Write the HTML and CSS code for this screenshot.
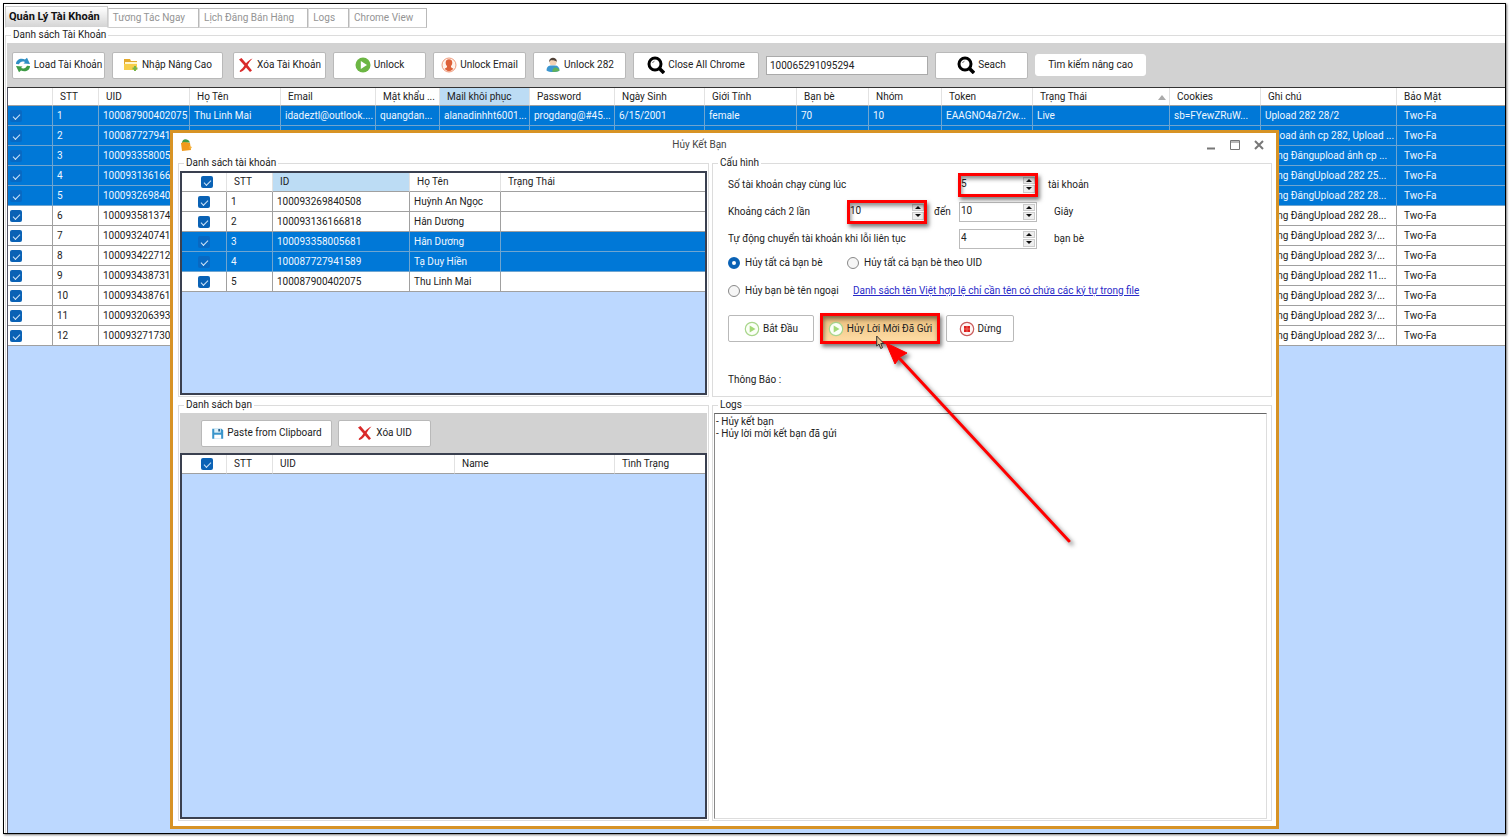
FILE: index.html
```html
<!DOCTYPE html>
<html lang="vi">
<head>
<meta charset="utf-8">
<title>Quản Lý Tài Khoản</title>
<link rel="stylesheet" href="styles.css">
</head>
<body>
<svg class="sprite" aria-hidden="true">
  <symbol id="i-sync" viewBox="0 0 16 16"><path d="M1 7C1 2.500 6 .5 10 2.500L12 .8 15 7 8.500 6.600 10 5C7 3.800 5 5 4 7.200z" fill="#2f8fc4"/><path d="M15 9C15 13.500 10 15.500 6 13.500L4 15.200 1 9 7.500 9.400 6 11C9 12.200 11 11 12 8.800z" fill="#3d9b45"/></symbol>
  <symbol id="i-folder" viewBox="0 0 16 16"><path d="M1 2h6l1 2h6v9H1z" fill="#e3a92c"/><path d="M2 5h12v3H2z" fill="#fff6cf"/><path d="M1 7h13v6H1z" fill="#f7cf4c"/><path d="M12 9v5M9.500 11.500h5" stroke="#79b648" stroke-width="2"/></symbol>
  <symbol id="i-x" viewBox="0 0 16 16"><path d="M1 2.500L3.500 1 8 6.200C10 4 12 2.500 14.500 1.500 12.500 3.500 11 5.500 9.600 8L14 13.500 12 15 8 10.400C6.500 12.500 5 14 2.500 15 1.500 14.500 1.500 14 2 13.500 4 12 5 10.500 6.400 8.500z" fill="#d92a2a"/></symbol>
  <symbol id="i-go" viewBox="0 0 16 16"><circle cx="8" cy="8" r="7.500" fill="#6cb644"/><path d="M5.800 4v8l6.200-4z" fill="#fff"/></symbol>
  <symbol id="i-person" viewBox="0 0 16 16"><circle cx="8" cy="8" r="7" fill="#fff3ec" stroke="#ef9a7c"/><path d="M8 2.200c4 0 4 4.800 2 6.800v1.200l2.300 1.500C10 15 6 15 3.700 11.700L6 10.200V9C4 7 4 2.200 8 2.200z" fill="#dd6139"/></symbol>
  <symbol id="i-user" viewBox="0 0 16 16"><circle cx="8" cy="5" r="3.600" fill="#f4d2b5"/><path d="M4.200 5C3.500-.8 12.500-.8 11.800 5 10.500 2.800 8 4 6 3z" fill="#514238"/><path d="M1.500 13.500C1.500 9.500 4 8.500 6 8.500h4c3 0 4.500 2 4.500 5-3 2-10 2-13 0z" fill="#3c96d0"/><path d="M8 12c2-3 6-1 6.500 1.500-2 1.500-5 1.500-7.500 1.300z" fill="#60b15a"/></symbol>
  <symbol id="i-search" viewBox="0 0 18 18"><circle cx="8" cy="8" r="6" fill="#fff" stroke="#000" stroke-width="3"/><path d="M12.500 12.500L17 17" stroke="#000" stroke-width="3.500"/><path d="M5.500 7Q6 5.500 7.500 5.200" fill="none" stroke="#777"/></symbol>
  <symbol id="i-disk" viewBox="0 0 16 16"><path d="M1.500 2h11.500l2 2v10.500H1.500z" fill="#3a95cb"/><path d="M4 2h8v5H4z" fill="#def0f8"/><path d="M9 2.500h2v3H9z" fill="#245b86"/><path d="M4 9.500h8.500v5H4z" fill="#fff"/></symbol>
  <symbol id="i-play" viewBox="0 0 16 16"><circle cx="8" cy="8" r="6.700" fill="#fbfff7" stroke="#a9d68c" stroke-width="1.200"/><path d="M5.700 4.500v7l5.800-3.500z" fill="#a3d977"/></symbol>
  <symbol id="i-stop" viewBox="0 0 16 16"><circle cx="8" cy="8" r="6.700" fill="#fff6f4" stroke="#c95b5b" stroke-width="1.200"/><path d="M5 5h6v6H5z" fill="#dc2020"/><path d="M5 8h6M8 5v6" stroke="#f36b5c"/></symbol>
</svg>

<main class="frame">
  <nav class="tabs">
    <button class="tab tab-on">Quản Lý Tài Khoản</button>
    <button class="tab">Tương Tác Ngay</button>
    <button class="tab">Lịch Đăng Bán Hàng</button>
    <button class="tab">Logs</button>
    <button class="tab">Chrome View</button>
  </nav>

  <fieldset class="group main-group">
    <legend>Danh sách Tài Khoản</legend>
    <div class="toolbar main-bar">
      <button class="btn w-s"><svg><use href="#i-sync"/></svg>Load Tài Khoản</button>
      <button class="btn w-m"><svg><use href="#i-folder"/></svg>Nhập Nâng Cao</button>
      <button class="btn w-s apart"><svg><use href="#i-x"/></svg>Xóa Tài Khoản</button>
      <button class="btn w-s"><svg><use href="#i-go"/></svg>Unlock</button>
      <button class="btn w-s"><svg><use href="#i-person"/></svg>Unlock Email</button>
      <button class="btn w-s"><svg><use href="#i-user"/></svg>Unlock 282</button>
      <button class="btn w-l"><svg class="big"><use href="#i-search"/></svg>Close All Chrome</button>
      <input class="search" type="text" value="100065291095294" aria-label="UID">
      <button class="btn w-s"><svg class="big"><use href="#i-search"/></svg>Seach</button>
      <button class="btn flat w-m">Tìm kiếm nâng cao</button>
    </div>
    <div class="sheet main-sheet">
      <table class="grid">
        <colgroup><col class="c45"><col class="c46"><col class="c91"><col class="c91"><col class="c95"><col class="c64"><col class="c90"><col class="c85"><col class="c90"><col class="c92"><col class="c72"><col class="c73"><col class="c91"><col class="c137"><col class="c91"><col class="c136"><col></colgroup>
        <thead><tr><th></th><th>STT</th><th>UID</th><th>Họ Tên</th><th>Email</th><th>Mật khẩu ...</th><th class="hot">Mail khôi phục</th><th>Password</th><th>Ngày Sinh</th><th>Giới Tính</th><th>Bạn bè</th><th>Nhóm</th><th>Token</th><th class="sorted">Trạng Thái</th><th>Cookies</th><th>Ghi chú</th><th>Bảo Mật</th></tr></thead>
        <tbody>
          <tr class="sel"><td><input type="checkbox" checked aria-label="1"></td><td>1</td><td>100087900402075</td><td>Thu Linh Mai</td><td>idadeztl@outlook....</td><td>quangdan...</td><td>alanadinhht6001...</td><td>progdang@#45...</td><td>6/15/2001</td><td>female</td><td>70</td><td>10</td><td>EAAGNO4a7r2w...</td><td>Live</td><td>sb=FYewZRuW...</td><td>Upload 282 28/2</td><td>Two-Fa</td></tr>
          <tr class="sel"><td><input type="checkbox" checked aria-label="2"></td><td>2</td><td>100087727941589</td><td></td><td></td><td></td><td></td><td></td><td></td><td></td><td></td><td></td><td></td><td></td><td></td><td>Upload ảnh cp 282, Upload ...</td><td>Two-Fa</td></tr>
          <tr class="sel"><td><input type="checkbox" checked aria-label="3"></td><td>3</td><td>100093358005681</td><td></td><td></td><td></td><td></td><td></td><td></td><td></td><td></td><td></td><td></td><td></td><td></td><td>Đang Đăngupload ảnh cp ...</td><td>Two-Fa</td></tr>
          <tr class="sel"><td><input type="checkbox" checked aria-label="4"></td><td>4</td><td>100093136166818</td><td></td><td></td><td></td><td></td><td></td><td></td><td></td><td></td><td></td><td></td><td></td><td></td><td>Đang ĐăngUpload 282 25...</td><td>Two-Fa</td></tr>
          <tr class="sel"><td><input type="checkbox" checked aria-label="5"></td><td>5</td><td>100093269840508</td><td></td><td></td><td></td><td></td><td></td><td></td><td></td><td></td><td></td><td></td><td></td><td></td><td>Đang ĐăngUpload 282 28...</td><td>Two-Fa</td></tr>
          <tr><td><input type="checkbox" checked aria-label="6"></td><td>6</td><td>1000935813747</td><td></td><td></td><td></td><td></td><td></td><td></td><td></td><td></td><td></td><td></td><td></td><td></td><td>Đang ĐăngUpload 282 28...</td><td>Two-Fa</td></tr>
          <tr><td><input type="checkbox" checked aria-label="7"></td><td>7</td><td>1000932407416</td><td></td><td></td><td></td><td></td><td></td><td></td><td></td><td></td><td></td><td></td><td></td><td></td><td>Đang ĐăngUpload 282 3/...</td><td>Two-Fa</td></tr>
          <tr><td><input type="checkbox" checked aria-label="8"></td><td>8</td><td>1000934227124</td><td></td><td></td><td></td><td></td><td></td><td></td><td></td><td></td><td></td><td></td><td></td><td></td><td>Đang ĐăngUpload 282 3/...</td><td>Two-Fa</td></tr>
          <tr><td><input type="checkbox" checked aria-label="9"></td><td>9</td><td>1000934387316</td><td></td><td></td><td></td><td></td><td></td><td></td><td></td><td></td><td></td><td></td><td></td><td></td><td>Đang ĐăngUpload 282 11...</td><td>Two-Fa</td></tr>
          <tr><td><input type="checkbox" checked aria-label="10"></td><td>10</td><td>1000934387617</td><td></td><td></td><td></td><td></td><td></td><td></td><td></td><td></td><td></td><td></td><td></td><td></td><td>Đang ĐăngUpload 282 3/...</td><td>Two-Fa</td></tr>
          <tr><td><input type="checkbox" checked aria-label="11"></td><td>11</td><td>1000932063936</td><td></td><td></td><td></td><td></td><td></td><td></td><td></td><td></td><td></td><td></td><td></td><td></td><td>Đang ĐăngUpload 282 3/...</td><td>Two-Fa</td></tr>
          <tr><td><input type="checkbox" checked aria-label="12"></td><td>12</td><td>1000932717306</td><td></td><td></td><td></td><td></td><td></td><td></td><td></td><td></td><td></td><td></td><td></td><td></td><td>Đang ĐăngUpload 282 3/...</td><td>Two-Fa</td></tr>
        </tbody>
      </table>
    </div>
  </fieldset>

  <section class="dialog" role="dialog" aria-labelledby="dlg-title">
    <header class="titlebar">
      <svg class="app-icon" viewBox="0 0 14 14"><path d="M3 5C3 0 9 0 11 4.500z" fill="#3f9b45"/><path d="M2 5l3-1 6 1 1 7-9 1z" fill="#f09a1c"/><path d="M10 8l3 1-2 3z" fill="#f5b23c"/></svg>
      <h1 id="dlg-title">Hủy Kết Bạn</h1>
      <div class="controls">
        <button aria-label="Minimize"><svg viewBox="0 0 10 10"><path d="M1 8.500h8" stroke-width="2"/></svg></button>
        <button aria-label="Maximize"><svg viewBox="0 0 10 10"><path d="M.5 .5h9v9h-9zM1 2h8"/></svg></button>
        <button aria-label="Close"><svg viewBox="0 0 10 10"><path d="M1 1l8 8M9 1L1 9" stroke-width="2"/></svg></button>
      </div>
    </header>

    <div class="panels">
      <fieldset class="group">
        <legend>Danh sách tài khoản</legend>
        <div class="sheet boxed">
          <table class="grid pick">
            <colgroup><col class="c45"><col class="c46"><col class="c137"><col class="c91"><col></colgroup>
            <thead><tr><th><input type="checkbox" checked aria-label="Tất cả tài khoản"></th><th>STT</th><th class="hot">ID</th><th>Họ Tên</th><th>Trạng Thái</th></tr></thead>
            <tbody>
              <tr><td><input type="checkbox" checked aria-label="Huỳnh An Ngọc"></td><td>1</td><td>100093269840508</td><td>Huỳnh An Ngọc</td><td></td></tr>
              <tr><td><input type="checkbox" checked aria-label="Hân Dương"></td><td>2</td><td>100093136166818</td><td>Hân Dương</td><td></td></tr>
              <tr class="sel"><td><input type="checkbox" checked aria-label="Hân Dương"></td><td>3</td><td>100093358005681</td><td>Hân Dương</td><td></td></tr>
              <tr class="sel"><td><input type="checkbox" checked aria-label="Tạ Duy Hiền"></td><td>4</td><td>100087727941589</td><td>Tạ Duy Hiền</td><td></td></tr>
              <tr><td><input type="checkbox" checked aria-label="Thu Linh Mai"></td><td>5</td><td>100087900402075</td><td>Thu Linh Mai</td><td></td></tr>
            </tbody>
          </table>
        </div>
      </fieldset>

      <fieldset class="group">
        <legend>Cấu hình</legend>
        <form class="config" onsubmit="return false">
          <div class="fields">
            <label class="wide" for="threads">Số tài khoản chạy cùng lúc</label>
            <span class="spin marked"><input id="threads" type="number" value="5"><span class="steps"><button type="button" aria-label="Tăng"></button><button type="button" class="down" aria-label="Giảm"></button></span></span>
            <span class="unit near">tài khoản</span>

            <label for="from">Khoảng cách 2 lần</label>
            <span class="spin marked"><input id="from" type="number" value="10"><span class="steps"><button type="button" aria-label="Tăng"></button><button type="button" class="down" aria-label="Giảm"></button></span></span>
            <label class="to" for="to">đến</label>
            <span class="spin"><input id="to" type="number" value="10"><span class="steps"><button type="button" aria-label="Tăng"></button><button type="button" class="down" aria-label="Giảm"></button></span></span>
            <span class="unit">Giây</span>

            <label class="wide" for="fails">Tự động chuyển tài khoản khi lỗi liên tục</label>
            <span class="spin"><input id="fails" type="number" value="4"><span class="steps"><button type="button" aria-label="Tăng"></button><button type="button" class="down" aria-label="Giảm"></button></span></span>
            <span class="unit">bạn bè</span>
          </div>
          <div class="choices">
            <label><input type="radio" name="mode" checked>Hủy tất cả bạn bè</label>
            <label><input type="radio" name="mode">Hủy tất cả bạn bè theo UID</label>
          </div>
          <div class="choices last">
            <label><input type="radio" name="mode">Hủy bạn bè tên ngoại</label>
            <a href="#">Danh sách tên Việt hợp lệ chỉ cần tên có chứa các ký tự trong file</a>
          </div>
          <div class="actions">
            <button class="btn w-start"><svg><use href="#i-play"/></svg>Bắt Đầu</button>
            <button class="btn w-cancel lit marked"><svg><use href="#i-play"/></svg>Hủy Lời Mời Đã Gửi</button>
            <button class="btn w-stop"><svg><use href="#i-stop"/></svg>Dừng</button>
          </div>
          <p class="notice">Thông Báo :</p>
        </form>
      </fieldset>

      <fieldset class="group">
        <legend>Danh sách bạn</legend>
        <div class="toolbar friend-bar">
          <button class="btn w-paste"><svg class="small"><use href="#i-disk"/></svg>Paste from Clipboard</button>
          <button class="btn w-s"><svg><use href="#i-x"/></svg>Xóa UID</button>
        </div>
        <div class="sheet boxed">
          <table class="grid pick">
            <colgroup><col class="c45"><col class="c46"><col class="c182"><col class="c160"><col></colgroup>
            <thead><tr><th><input type="checkbox" checked aria-label="Tất cả bạn"></th><th>STT</th><th>UID</th><th>Name</th><th>Tình Trạng</th></tr></thead>
          </table>
        </div>
      </fieldset>

      <fieldset class="group">
        <legend>Logs</legend>
        <textarea class="logs" readonly aria-label="Logs">- Hủy kết bạn
- Hủy lời mời kết bạn đã gửi</textarea>
      </fieldset>
    </div>

    <svg class="arrow" viewBox="0 0 200 216" aria-hidden="true">
      <g class="arrow-ink"><path d="M16 19L185 201" fill="none" stroke="#f00" stroke-width="3" stroke-linecap="round"/><path d="M2 3L23 13 16 17 11 24z" fill="#f00" stroke="#f00"/></g>
    </svg>
    <svg class="pointer" viewBox="0 0 9 15" aria-hidden="true"><path d="M.7 1v10l2.300-2 1.700 4.500 1.800-.8L4.800 8.500h3z" fill="#e9c48c" stroke="#333"/></svg>
  </section>
</main>
</body>
</html>
```
FILE: styles.css
```css
* { box-sizing: border-box; }

body {
  margin: 0;
  height: 100vh;
  padding: 3px 4px 4px 3px;
  display: flex;
  overflow: hidden;
  background: #fff;
  color: #222;
}

body, button, input, textarea {
  font-family: Roboto, "Liberation Sans", sans-serif;
  font-size: 10px;
  line-height: 14px;
}

.sprite { position: absolute; width: 0; height: 0; }

.frame {
  position: relative;
  flex: 1;
  min-width: 0;
  display: flex;
  flex-direction: column;
  border: 1px solid #000;
  box-shadow: 1px 1px 2px #777;
  background: #fff;
}

/* Tabs */
.tabs {
  display: flex;
  align-items: flex-end;
  height: 24px;
  padding: 2px 0 0 1px;
}
.tab {
  height: 20px;
  padding: 0 13px 0 4px;
  border: 1px solid #b9b9b9;
  border-left-color: #ddd;
  border-bottom-color: #ccc;
  background: #fff;
  color: #949494;
  text-align: left;
}
.tab-on {
  height: 22px;
  padding: 0 7px 0 3px;
  border-color: #ccc;
  border-bottom-color: transparent;
  background: linear-gradient(#fff, #d4d4d4);
  color: #111;
  font-size: 11px;
  font-weight: bold;
}

/* Group boxes */
.group {
  min-width: 0;
  margin: 0;
  padding: 0 1px 1px;
  border: 1px solid #dcdcdc;
  display: flex;
  flex-direction: column;
}
.group legend { margin-left: 4px; padding: 0 2px; height: 15px; }
.main-group {
  flex: 1;
  min-height: 0;
  margin-left: 1px;
  padding: 0 0 0 1px;
  border-right: 0;
  border-bottom: 0;
}

/* Toolbars and buttons */
.toolbar { display: flex; align-items: center; gap: 7px; background: #d2d2d2; }
.main-bar { height: 44px; padding-left: 5px; }
.friend-bar { height: 40px; padding-left: 21px; gap: 6px; }
.btn {
  display: flex;
  align-items: center;
  justify-content: center;
  gap: 3px;
  height: 27px;
  padding: 0;
  border: 1px solid #b9b9b9;
  border-radius: 2px;
  background: #fff;
  color: #222;
  white-space: nowrap;
}
.btn svg { width: 16px; height: 16px; flex: none; }
.btn svg.big { width: 18px; height: 18px; }
.btn svg.small { width: 13px; height: 13px; }
.w-s { width: 93px; }
.w-m { width: 111px; }
.w-l { width: 126px; }
.w-paste { width: 131px; }
.w-start { width: 86px; }
.w-cancel { width: 118px; }
.w-stop { width: 68px; }
.apart { margin-left: 3px; }
.flat { height: 22px; border-color: #fff; border-radius: 3px; }
.search {
  width: 162px;
  height: 19px;
  padding: 0 3px;
  border: 1px solid #aaa;
  background: #fff;
  color: #222;
}

/* Data grids */
.sheet { flex: 1; min-height: 0; background: #bcd8ff; overflow: hidden; }
.main-sheet { border-top: 1px solid #333; border-left: 1px solid #556; }
.boxed { border: 2px solid #3a4050; }
.grid { width: 100%; table-layout: fixed; border-collapse: separate; border-spacing: 0; }
.grid th, .grid td {
  padding: 0 0 0 4px;
  overflow: hidden;
  white-space: nowrap;
  text-align: left;
  font-weight: normal;
}
.grid th {
  height: 18px;
  padding-left: 7px;
  background: #fff;
  border-right: 1px solid #e2e2e2;
  border-bottom: 1px solid #a0a0a0;
}
.grid td {
  height: 20px;
  background: #fff;
  border-right: 1px solid #a0a0a0;
  border-bottom: 1px solid #a0a0a0;
}
.grid td:first-child { padding-left: 2px; }
.grid td:last-child { padding-left: 7px; }
.grid th:last-child, .grid td:last-child { border-right: 0; }
.grid .sel td { background: #0078d7; color: #f0f7ff; border-color: #6fa5d0; }
.grid th.hot { background: #bcdcf4; }
.sorted::after {
  content: "";
  float: right;
  margin: 5px 3px 0 0;
  border: 4px solid transparent;
  border-top: 0;
  border-bottom: 5px solid #aaa;
}
.grid.pick th { height: 19px; }
.grid.pick th:first-child { padding-left: 19px; }
.grid.pick td:first-child { padding-left: 16px; }
.c45 { width: 45px; }
.c46 { width: 46px; }
.c64 { width: 64px; }
.c72 { width: 72px; }
.c73 { width: 73px; }
.c85 { width: 85px; }
.c90 { width: 90px; }
.c91 { width: 91px; }
.c92 { width: 92px; }
.c95 { width: 95px; }
.c136 { width: 136px; }
.c137 { width: 137px; }
.c160 { width: 160px; }
.c182 { width: 182px; }

input[type="checkbox"] {
  appearance: none;
  display: block;
  width: 12px;
  height: 12px;
  margin: 0;
  border-radius: 2px;
  background: #0a62b5;
}
input[type="checkbox"]::before {
  content: "";
  display: block;
  width: 6px;
  height: 3px;
  margin: 4px 3px;
  border: solid #cfe4f8;
  border-width: 0 0 1px 1px;
  transform: rotate(-45deg);
}
.sel input[type="checkbox"] { background: #0869c3; }

/* Dialog window floating over the account list */
.dialog {
  position: absolute;
  left: 166px;
  top: 126px;
  right: 226px;
  bottom: 4px;
  display: flex;
  flex-direction: column;
  border: 3px solid #d79325;
  background: #fff;
}
.titlebar { display: flex; align-items: center; height: 23px; padding: 0 11px 0 6px; }
.app-icon { width: 14px; height: 14px; }
.titlebar h1 { flex: 1; margin: 0; font-size: 10px; font-weight: normal; color: #444; text-align: center; }
.controls { display: flex; gap: 13px; }
.controls button { width: 11px; height: 11px; padding: 0; border: 0; background: none; }
.controls svg { display: block; width: 10px; height: 10px; fill: none; stroke: #777; }

.panels {
  flex: 1;
  min-height: 0;
  display: grid;
  grid-template-columns: 531fr 560fr;
  grid-template-rows: 241px 1fr;
  gap: 1px 3px;
  padding: 0 4px 5px 5px;
}

/* Configuration form */
.config { padding: 0 14px; }
.fields {
  display: grid;
  grid-template-columns: 119px 80px 31px 80px auto;
  grid-auto-rows: 27px;
  align-items: center;
}
.fields label { white-space: nowrap; }
.fields .wide { grid-column: 1 / 4; }
.fields .to { text-align: center; }
.unit { padding-left: 16px; }
.near { padding-left: 10px; }
.spin {
  display: flex;
  height: 20px;
  margin: 0 1px;
  border: 1px solid #bbb;
  background: #fff;
}
.spin input {
  flex: 1;
  min-width: 0;
  padding: 0 1px 2px;
  border: 0;
  outline: 0;
  background: transparent;
  color: #222;
  appearance: textfield;
}
.spin input::-webkit-inner-spin-button { appearance: none; margin: 0; }
.steps { display: flex; flex-direction: column; width: 14px; padding: 1px; gap: 1px; }
.steps button {
  flex: 1;
  display: flex;
  align-items: center;
  justify-content: center;
  padding: 0;
  border: 1px solid #ccc;
  background: #eee;
}
.steps button::before { content: ""; border: 3px solid transparent; border-top: 0; border-bottom-color: #111; }
.steps .down::before { border-top: 3px solid #111; border-bottom: 0; }

.marked { position: relative; }
.marked::after {
  content: "";
  position: absolute;
  inset: -3px -2px;
  border: 3px solid #f00;
  box-shadow: 2px 3px 4px rgba(0, 0, 0, .5), inset 1px 3px 4px rgba(0, 0, 0, .45);
  pointer-events: none;
}

.choices { display: flex; align-items: center; height: 22px; }
.choices.last { height: 33px; }
.choices label { display: flex; align-items: center; gap: 5px; width: 119px; white-space: nowrap; }
.choices a { margin-left: 6px; color: #2a2ac8; white-space: nowrap; }
input[type="radio"] {
  appearance: none;
  flex: none;
  width: 12px;
  height: 12px;
  margin: 0;
  border: 1px solid #888;
  border-radius: 50%;
  background: #f6f6f6;
}
input[type="radio"]:checked { border: 4px solid #0a62b5; background: #fff; }

.actions { display: flex; gap: 7px; padding-top: 8px; }
.lit { background: linear-gradient(#e8bd7c, #ffdca4); border-color: #d8a860; }
.notice { margin: 31px 0 0; }

.logs {
  flex: 1;
  min-height: 0;
  margin-right: 3px;
  padding: 2px 1px;
  border: 1px solid #ddd;
  border-top-color: #666;
  border-left-color: #888;
  outline: 0;
  resize: none;
  background: #fff;
  color: #222;
  line-height: 12px;
}

/* Annotation arrow and mouse pointer */
.arrow { position: absolute; left: 711px; top: 207px; width: 200px; height: 216px; pointer-events: none; }
.arrow-ink { filter: drop-shadow(3px 3px 2px rgba(0, 0, 0, .5)); }
.pointer { position: absolute; left: 703px; top: 202px; width: 9px; height: 15px; pointer-events: none; }
```
